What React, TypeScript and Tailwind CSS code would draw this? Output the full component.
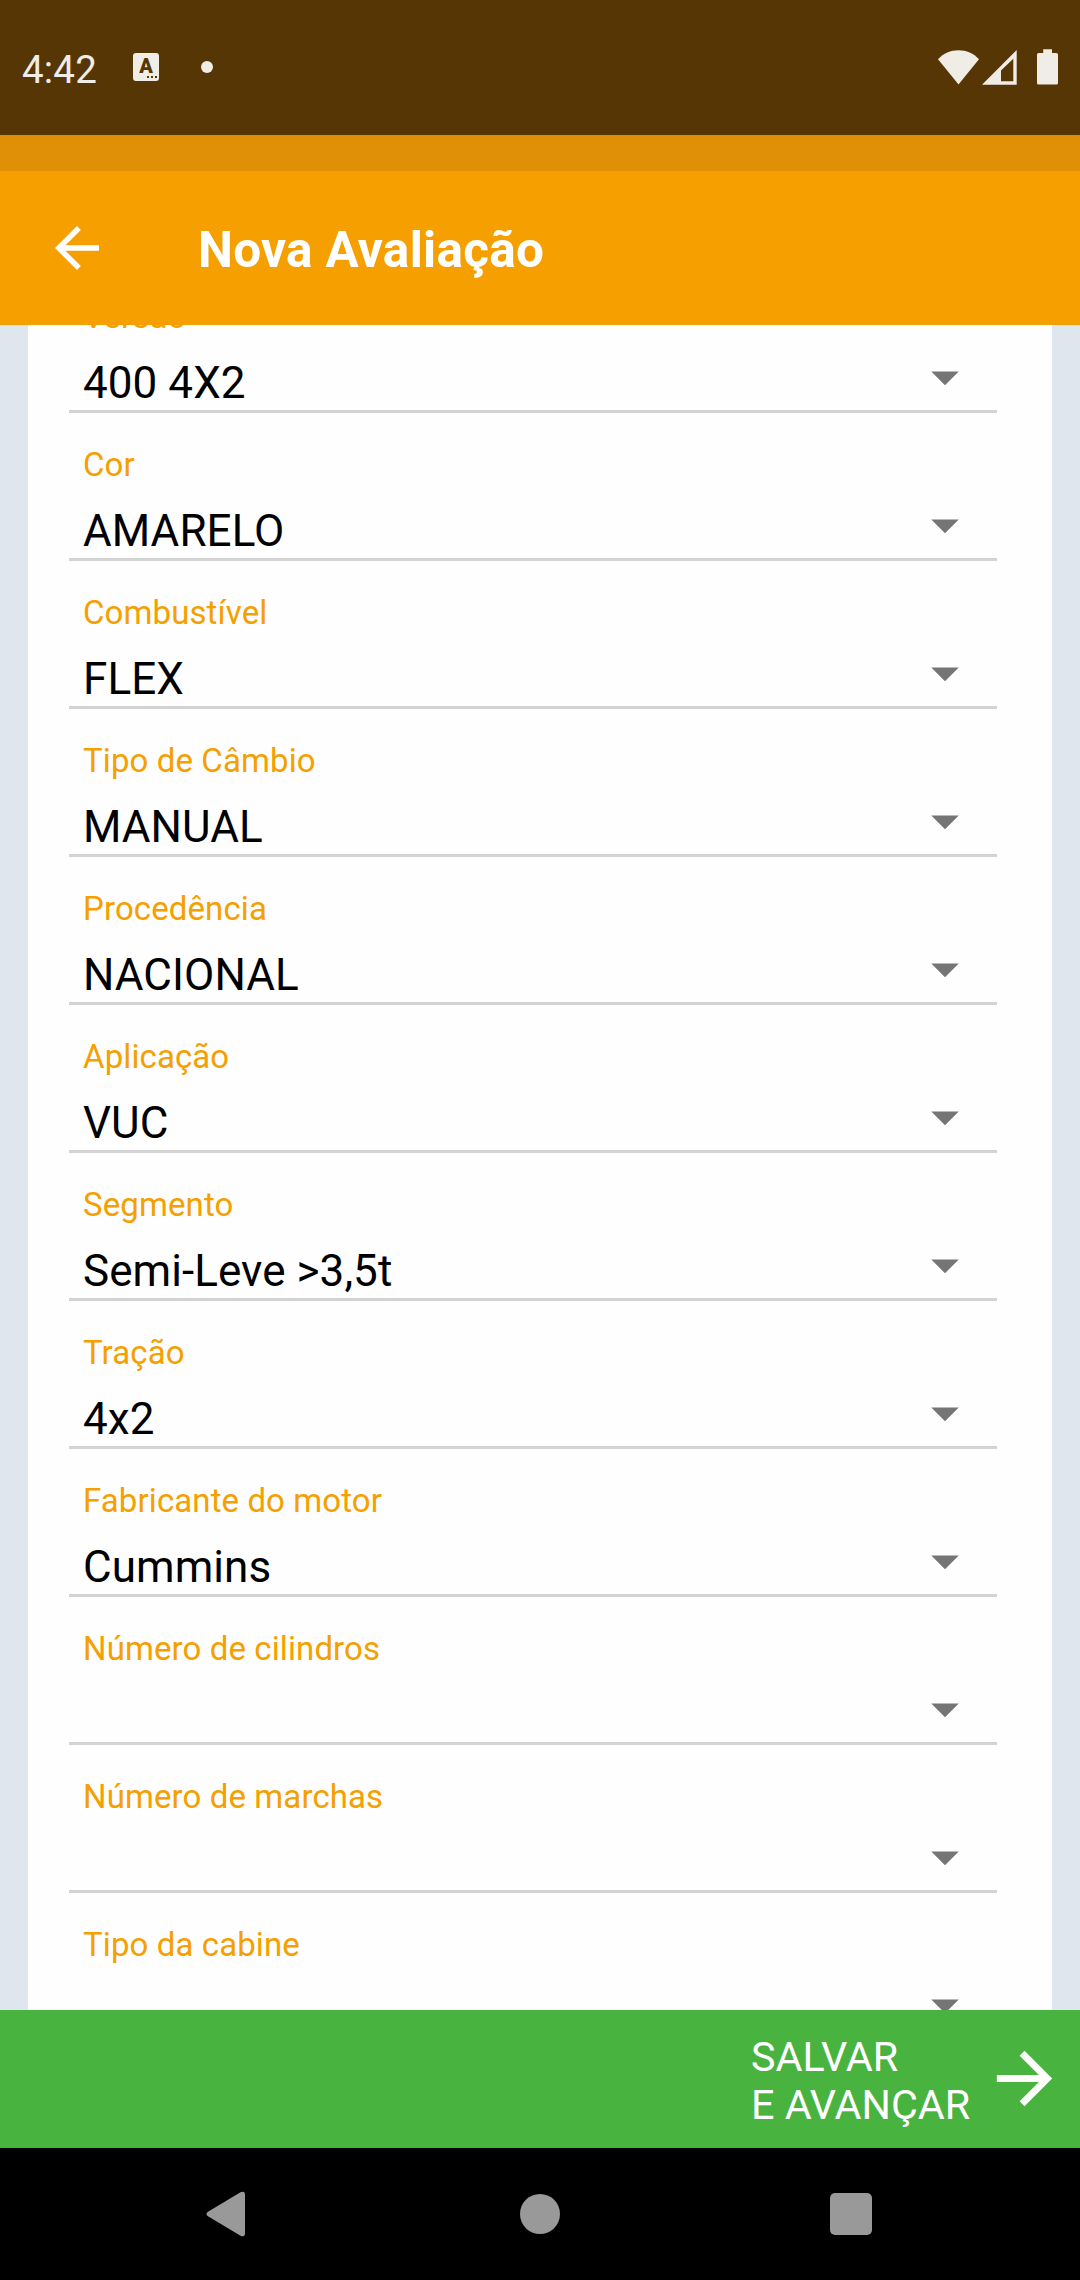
const fields: { label: string; value: string }[] = [
  { label: "Versão", value: "400 4X2" },
  { label: "Cor", value: "AMARELO" },
  { label: "Combustível", value: "FLEX" },
  { label: "Tipo de Câmbio", value: "MANUAL" },
  { label: "Procedência", value: "NACIONAL" },
  { label: "Aplicação", value: "VUC" },
  { label: "Segmento", value: "Semi-Leve >3,5t" },
  { label: "Tração", value: "4x2" },
  { label: "Fabricante do motor", value: "Cummins" },
  { label: "Número de cilindros", value: "" },
  { label: "Número de marchas", value: "" },
  { label: "Tipo da cabine", value: "" },
];

function StatusBar() {
  return (
    <div className="flex h-[135px] shrink-0 items-start bg-[#573605] text-[#f0ece6]">
      <span className="mt-[47px] ml-[22px] w-[111px] text-[38.5px] leading-[46px] tracking-[0.2px]">4:42</span>
      <div className="mt-[53px] flex h-[28px] w-[26px] flex-col items-center rounded-[3px] bg-[#f0ece6] text-[#573605]">
        <span className="mt-[2px] h-[21px] text-[20px] leading-[23px] font-black">A</span>
        <div className="mr-[2px] flex gap-[2px] self-end">
          <i className="size-[2px] bg-[#573605]" />
          <i className="size-[2px] bg-[#573605]" />
          <i className="size-[2px] bg-[#573605]" />
        </div>
      </div>
      <div className="mt-[61px] ml-[42px] size-[12px] rounded-full bg-[#f0ece6]" />
      <div className="mt-[49px] mr-[22px] ml-auto flex">
        <svg width="41" height="36" viewBox="0 0 41 36" fill="currentColor">
          <path d="M20.5 35.5 0 10.2C5.500 4.200 12.500 1.200 20.500 1.200S35.500 4.200 41 10.200Z" />
        </svg>
        <svg className="ml-[3px]" width="35" height="36" viewBox="0 0 35 36" fill="currentColor">
          <path fillRule="evenodd" d="M0 35.700 34.700 1v34.700ZM19 21.500V32.300h12.300V9.700Z" />
        </svg>
        <svg className="ml-[20px]" width="21" height="36" viewBox="0 0 21 36" fill="currentColor">
          <path d="M6.200 0.200h8.800v3.800h4.400q1.600 0 1.600 1.600v28.400q0 1.600-1.600 1.600H1.600Q0 35.600 0 34V5.600Q0 4 1.600 4h4.600Z" />
        </svg>
      </div>
    </div>
  );
}

function AppBar() {
  return (
    <header className="flex h-[154px] shrink-0 items-start bg-[#f5a000] text-white">
      <svg className="mt-[44px] ml-[44px]" width="66" height="66" viewBox="0 0 24 24" fill="currentColor">
        <path d="M20 11H7.830l5.590-5.590L12 4l-8 8 8 8 1.410-1.410L7.830 13H20v-2z" />
      </svg>
      <h1 className="mt-[49px] ml-[88px] text-[49.5px] leading-[60px] font-bold tracking-[0.3px]">Nova Avaliação</h1>
    </header>
  );
}

function SelectField({ label, value }: { label: string; value: string }) {
  return (
    <div className="flex h-[148px] shrink-0 border-b-[3px] border-[#d3d3d3] pl-[14px]">
      <div className="flex flex-1 flex-col gap-[20px] pt-[32px]">
        <label className="h-[40px] text-[33px] leading-[40px] tracking-[0.1px] text-[#f5a000]">{label}</label>
        <span className="h-[52px] text-[44px] leading-[52px] tracking-[0.06px] text-black">{value}</span>
      </div>
      <svg className="mt-[79px] mr-[19px]" width="66" height="66" viewBox="0 0 24 24" fill="#757575">
        <path d="M7 10l5 5 5-5z" />
      </svg>
    </div>
  );
}

export default function App() {
  return (
    <div className="flex h-[2280px] w-[1080px] flex-col overflow-hidden bg-[#dfe6ee] font-['Roboto',sans-serif]">
      <StatusBar />
      <div className="h-[36px] shrink-0 bg-[#df9007]" />
      <AppBar />
      <main className="h-[1685px] shrink-0 overflow-hidden px-[28px]">
        <div className="-mt-[60px] flex flex-col bg-[#fefefe] pr-[55px] pl-[41px]">
          {fields.map((f) => (
            <SelectField key={f.label} label={f.label} value={f.value} />
          ))}
        </div>
      </main>
      <button className="flex h-[138px] shrink-0 items-start justify-end bg-[#49b33f] text-left text-white">
        <span className="mt-[23px] w-[232px] text-[41.25px] leading-[48px] whitespace-nowrap">
          SALVAR
          <br />E AVANÇAR
        </span>
        <svg className="mt-[27px] mr-[14px]" width="83" height="83" viewBox="0 0 24 24" fill="currentColor">
          <path d="M12 4l-1.410 1.410L16.170 11H4v2h12.170l-5.580 5.590L12 20l8-8z" />
        </svg>
      </button>
      <nav className="flex h-[132px] shrink-0 items-center bg-black pl-[206px]">
        <svg width="40" height="46" viewBox="0 0 40 46" fill="#999">
          <path d="M1.600 21 34.500 1.300Q39 -0.500 39 4v38q0 4.500-4.500 2.700L1.600 25Q-0.600 23 1.600 21Z" />
        </svg>
        <div className="ml-[274px] size-[40px] rounded-full bg-[#999]" />
        <div className="ml-[270px] size-[42px] rounded-[5px] bg-[#999]" />
      </nav>
    </div>
  );
}
